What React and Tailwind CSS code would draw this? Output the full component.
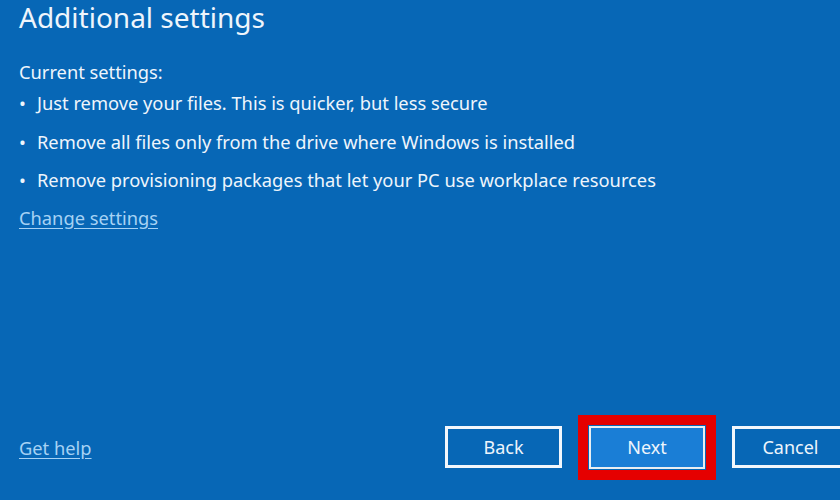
import React from "react";

export default function App() {
  const font = { fontFamily: '"Noto Sans", "Open Sans", sans-serif' };
  return (
    <div
      className="w-[840px] h-[500px] bg-[#0767b6] text-[#eef5fc] flex flex-col overflow-hidden"
      style={font}
    >
      <div className="pl-[19px] pt-[3px] flex flex-col">
        <h1 className="text-[28px] leading-[29px] font-normal">Additional settings</h1>
        <p className="text-[18.3px] leading-[24px] mt-[28px]">Current settings:</p>
        <ul className="flex flex-col gap-[14.5px] mt-[7px] text-[18.3px] leading-[24px]">
          <li className="flex">
            <span className="w-[18px]">•</span>
            <span>Just remove your files. This is quicker, but less secure</span>
          </li>
          <li className="flex">
            <span className="w-[18px]">•</span>
            <span>Remove all files only from the drive where Windows is installed</span>
          </li>
          <li className="flex">
            <span className="w-[18px]">•</span>
            <span>Remove provisioning packages that let your PC use workplace resources</span>
          </li>
        </ul>
        <a className="text-[18.3px] leading-[24px] mt-[14px] text-[#a6d2f4] underline underline-offset-[3px] self-start">
          Change settings
        </a>
      </div>
      <div className="mt-auto mb-[31px] flex items-center pl-[19px]">
        <a className="text-[18.3px] leading-[24px] mt-[1px] text-[#a6d2f4] underline underline-offset-[3px]">Get help</a>
        <div className="ml-auto flex gap-[27px] -mr-[9px]">
          <button className="w-[117px] h-[42px] border-[3px] border-[#f2f7fc] text-[18px] text-[#eef5fc]">Back</button>
          <div className="relative">
            <button className="w-[116px] h-[43px] border-2 border-[#e9eef2] bg-[#1a7ed6] text-[18px] text-[#eef5fc]">Next</button>
            <div className="absolute -inset-[11px] border-[10px] border-[#e50000]" />
          </div>
          <button className="w-[117px] h-[42px] border-[3px] border-[#f2f7fc] text-[18px] text-[#eef5fc]">Cancel</button>
        </div>
      </div>
    </div>
  );
}
